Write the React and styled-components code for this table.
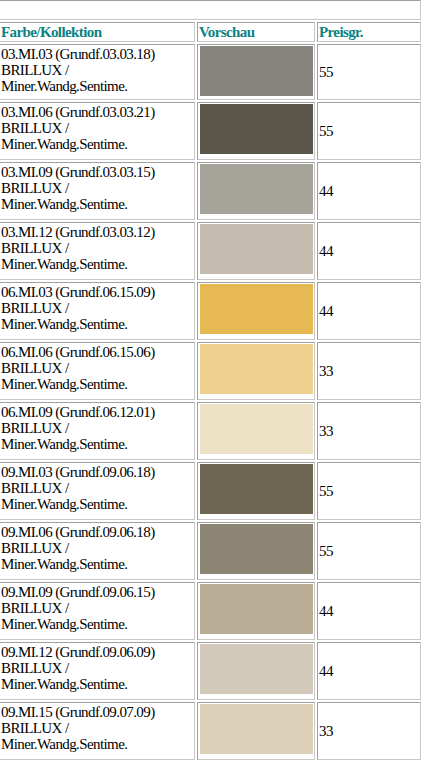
import React from "react";
import styled, { createGlobalStyle } from "styled-components";

const GlobalStyle = createGlobalStyle`
    html, body {
        margin: 0;
        padding: 0;
        background: #ffffff;
        overflow: hidden;
    }
    body {
        font-family: "Liberation Serif", "Times New Roman", serif;
        color: #000000;
    }
`;

// Farbtöne der Kollektion
const colors = [
    { name: "03.MI.03", base: "03.03.18", price: 55, hex: "#86837c" },
    { name: "03.MI.06", base: "03.03.21", price: 55, hex: "#5a564a" },
    { name: "03.MI.09", base: "03.03.15", price: 44, hex: "#a6a39b" },
    { name: "03.MI.12", base: "03.03.12", price: 44, hex: "#c5bcaf" },
    { name: "06.MI.03", base: "06.15.09", price: 44, hex: "#e6b952" },
    { name: "06.MI.06", base: "06.15.06", price: 33, hex: "#eed08f" },
    { name: "06.MI.09", base: "06.12.01", price: 33, hex: "#ede2c6" },
    { name: "09.MI.03", base: "09.06.18", price: 55, hex: "#6e6553" },
    { name: "09.MI.06", base: "09.06.18", price: 55, hex: "#8c8574" },
    { name: "09.MI.09", base: "09.06.15", price: 44, hex: "#b9ad95" },
    { name: "09.MI.12", base: "09.06.09", price: 44, hex: "#d3c9bb" },
    { name: "09.MI.15", base: "09.07.09", price: 33, hex: "#dcd0b9" },
];

const App = () => {
    return (
        <>
            <GlobalStyle />
            <Table>
                <colgroup>
                    <Col width={196} />
                    <Col width={118} />
                    <Col width={104} />
                </colgroup>
                <tbody>
                    <tr>
                        <BlankCell colSpan={3} />
                    </tr>
                    <tr>
                        <HeadCell>Farbe/Kollektion</HeadCell>
                        <HeadCell>Vorschau</HeadCell>
                        <HeadCell>Preisgr.</HeadCell>
                    </tr>
                    {colors.map((c, i) => (
                        <tr key={c.name}>
                            <NameCell first={i === 0}>
                                {c.name} (Grundf.{c.base})
                                <br />
                                BRILLUX /
                                <br />
                                Miner.Wandg.Sentime.
                            </NameCell>
                            <SwatchCell first={i === 0}>
                                <Swatch style={{ background: c.hex }} />
                            </SwatchCell>
                            <Cell first={i === 0}>{c.price}</Cell>
                        </tr>
                    ))}
                </tbody>
            </Table>
        </>
    );
};

export default App;

const Table = styled.table`
    margin: -3px 0 0 -4px;
    width: 428px;
    table-layout: fixed;
    border-collapse: separate;
    border-spacing: 2px;
    border: 1px solid #d0d0d0;
`;

const Col = styled.col`
    width: ${(p) => p.width}px;
`;

const Cell = styled.td`
    box-sizing: border-box;
    height: ${(p) => (p.first ? 56 : 58)}px;
    padding: 1px;
    border: 1px solid;
    border-color: #a0a0a0 #c8c8c8 #c8c8c8 #a0a0a0;
    vertical-align: middle;
    font-size: 15px;
    line-height: 16px;
    letter-spacing: -0.6px;
    white-space: nowrap;
`;

const NameCell = styled(Cell)`
    vertical-align: top;
`;

const BlankCell = styled(Cell)`
    height: 20px;
`;

const HeadCell = styled(Cell)`
    height: 20px;
    font-weight: bold;
    color: #0b8282;
`;

const SwatchCell = styled(Cell)`
    vertical-align: top;
`;

const Swatch = styled.div`
    width: 113px;
    height: 50px;
    margin-left: 1px;
`;
